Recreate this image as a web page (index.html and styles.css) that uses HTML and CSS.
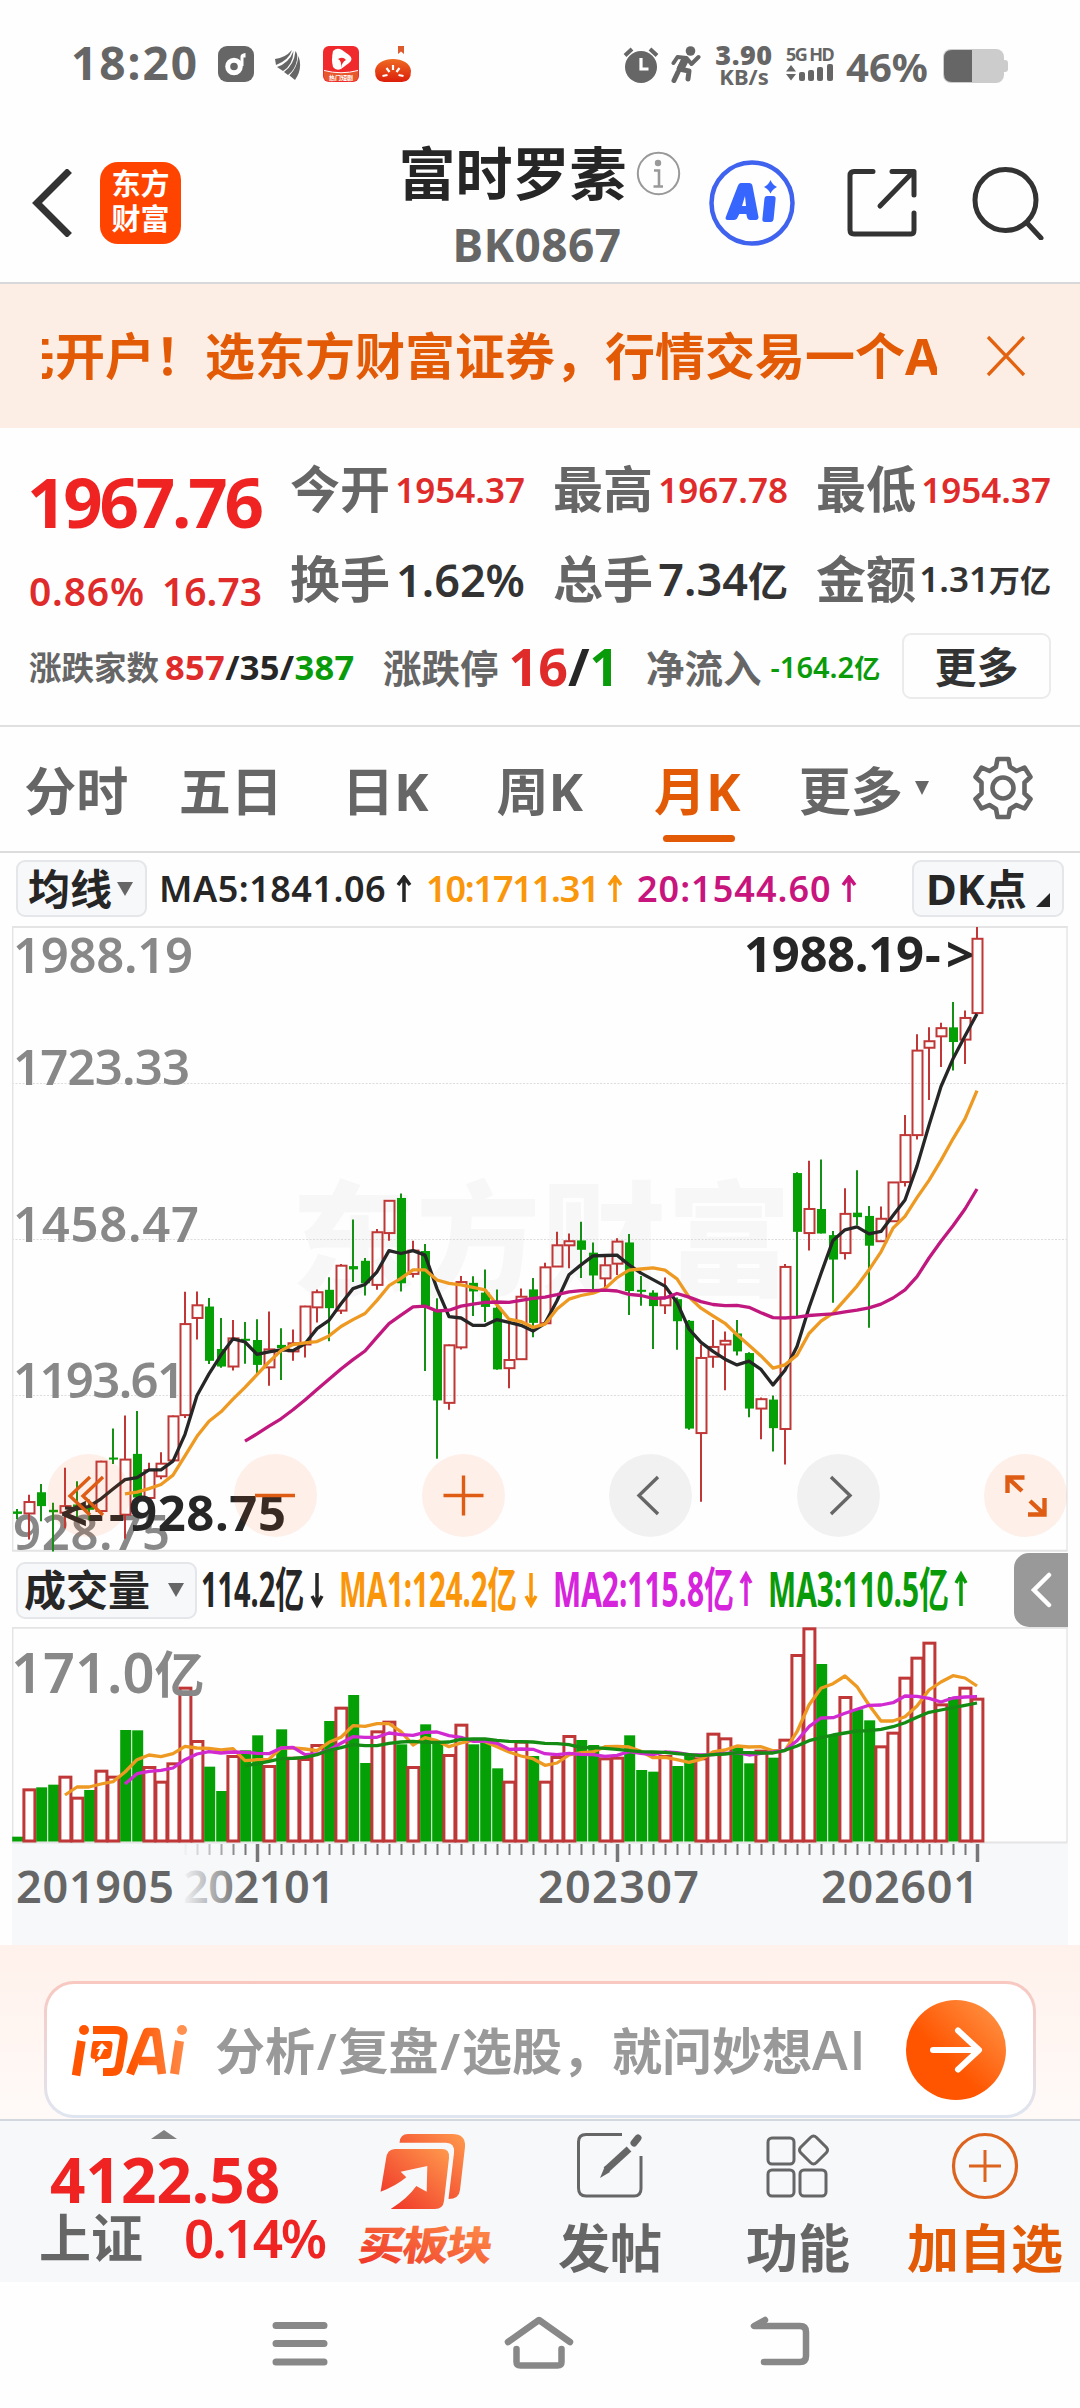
FILE: index.html
```html
<!DOCTYPE html>
<html lang="zh-CN">
<head>
<meta charset="utf-8">
<title>富时罗素 BK0867</title>
<link rel="stylesheet" href="styles.css">
</head>
<body>
<svg width="0" height="0" class="defs">
  <defs>
    <linearGradient id="gBuy" x1="0" y1="1" x2="1" y2="0"><stop offset="0" stop-color="#ee2e26"/><stop offset="1" stop-color="#ff9a4d"/></linearGradient>
    <linearGradient id="gGo" x1="0" y1="1" x2="1" y2="0"><stop offset=".4" stop-color="#ff5500"/><stop offset="1" stop-color="#ff9a4d"/></linearGradient>
    <linearGradient id="gAsk" gradientUnits="userSpaceOnUse" x1="0" y1="0" x2="124" y2="0"><stop offset=".5" stop-color="#ff5500"/><stop offset="1" stop-color="#ff9050"/></linearGradient>
    <linearGradient id="gTomato" x1="0" y1="0" x2="0" y2="1"><stop offset="0" stop-color="#ee6a22"/><stop offset="1" stop-color="#dc1e0a"/></linearGradient>
    <linearGradient id="gFade" x1="0" y1="0" x2="1" y2="0"><stop offset="0" stop-color="#f7f8fa"/><stop offset=".15" stop-color="#f7f8fa" stop-opacity=".85"/><stop offset="1" stop-color="#f7f8fa" stop-opacity="0"/></linearGradient>
  </defs>
</svg>

<div class="status">
  <span class="clock">18:20</span>
  <svg class="s-note" width="36" height="36" viewBox="0 0 36 36"><rect width="36" height="36" rx="9" fill="#666"/><circle cx="16" cy="20.5" r="6.3" fill="none" stroke="#fff" stroke-width="5"/><path d="M22.500 20V10.500q0-3 5-3.500v4.500h-2V20z" fill="#fff"/></svg>
  <svg class="s-wing" width="27" height="31" viewBox="0 0 27 31" fill="#666"><path d="M0 10Q10 9 17 1Q14 11 1 16z"/><path d="M2 18Q14 14 18.500 2Q18 16 8 22z"/><path d="M9 23Q19 16 20.500 2Q23 5 22 11Q20 21 13 26z"/><path d="M14.500 26.500Q22 19 23.500 7Q28 20 20 31z"/></svg>
  <svg class="s-video" width="36" height="36" viewBox="0 0 36 36"><rect width="36" height="36" rx="6" fill="#f02a2c"/><path d="M1 25q17 4 34 0v6q-1 4-5 4H6q-4 0-5-4z" fill="#e8562c"/><path d="M1 24.500q17 4.500 34 0" fill="none" stroke="#fff" stroke-width="1"/><path d="M10 5q4-4 9-1l7 5q5 4 0 8l-8 6q-5 2-8-2-2-7 0-16z" fill="#fff"/><path d="M15 13q5-3 8 1-4 2-5 8 1-7-3-9z" fill="#f02a2c"/><text x="18" y="33.500" text-anchor="middle" class="tiny">热门短剧</text></svg>
  <svg class="s-tomato" width="36" height="36" viewBox="0 0 36 36"><path d="M0 25C1 9 35 9 36 25q0 11-9 11H9Q0 36 0 25z" fill="url(#gTomato)"/><path d="M23 0h6v8l-3-2.500-3 2.500z" fill="#dc5a2c"/><path d="M18 19v5M11.500 22l3 4M24.500 22l-3 4M7.500 30l5-1M28.500 30l-5-1" stroke="#fff" stroke-width="2.200"/></svg>
  <span class="grow"></span>
  <svg class="s-alarm" width="36" height="36" viewBox="0 0 36 36"><circle cx="18" cy="20" r="16" fill="#666"/><path d="M2 8.500L9 2M34 8.500L27 2" stroke="#666" stroke-width="4"/><path d="M18 11v11h7.500" fill="none" stroke="#fff" stroke-width="3.200"/></svg>
  <svg class="s-run" width="30" height="37" viewBox="0 0 30 37" fill="none" stroke="#666" stroke-linecap="round" stroke-linejoin="round"><circle cx="19.500" cy="5" r="4.800" fill="#666" stroke="none"/><path d="M2.500 17l4-6 9 1 5 6 7-7" stroke-width="4"/><path d="M12 15l-4 8 10 2-1 8M7 26l-4 8.500" stroke-width="5"/><path d="M14 14l-4 8" stroke-width="7.500"/></svg>
  <span class="net"><b>3.90</b><i>KB/s</i></span>
  <span class="cell"><b>5G HD</b>
    <svg width="48" height="17" viewBox="0 0 48 17" fill="#666"><path d="M0 7.500L5 1l5 6.500zM0 10l5 6.500 5-6.500z"/><rect x="13" y="8" width="6" height="9" rx="2"/><rect x="22" y="6" width="6" height="11" rx="2"/><rect x="31" y="3" width="6" height="14" rx="2"/><rect x="41" y="0" width="6" height="17" rx="2"/></svg>
  </span>
  <span class="pct">46%</span>
  <svg class="s-bat" width="65" height="34" viewBox="0 0 65 34"><rect width="61" height="34" rx="8" fill="#ccc"/><rect x="58" y="11" width="7" height="12" rx="3" fill="#ccc"/><path d="M29 1v32H9q-8 0-8-8V9q0-8 8-8z" fill="#666"/></svg>
</div>

<header class="top">
  <div class="top-left">
    <svg width="40" height="68" viewBox="0 0 40 68"><path d="M35 4L5 34l30 30" fill="none" stroke="#333" stroke-width="7" stroke-linecap="square"/></svg>
    <div class="brand"><span>东方</span><span>财富</span></div>
  </div>
  <div class="top-mid">
    <div class="name">富时罗素<svg width="45" height="45" viewBox="0 0 45 45"><circle cx="22.500" cy="22.500" r="20.700" fill="none" stroke="#999" stroke-width="2"/><circle cx="22" cy="12" r="3.200" fill="#999"/><path d="M18 19.500h5V35M17.500 35.500h9.500" fill="none" stroke="#999" stroke-width="2.600"/></svg></div>
    <div class="code">BK0867</div>
  </div>
  <div class="top-right">
    <svg width="88" height="88" viewBox="0 0 88 88"><circle cx="44" cy="44" r="40.500" fill="none" stroke="#3f63ee" stroke-width="4.500"/><path d="M32 24h9q3 0 3.500 3l6 31q0 3-3 3h-5q-3 0-3.500-3l-.7-3h-7l-1.500 3q-1 3-4 3h-6q-3 0-2-3l12-31q1-3 3-3zm2 23h4l-1-10z" fill="#3766ff"/><path d="M59 37h6q3 0 2.600 3l-2 20q-.5 3-3 3H57q-3 0-2.600-3l2-20q.4-3 2.600-3zM62.500 21q2 5 6.500 7-4.500 2-6.500 6.500Q60.500 30 56 28q4.500-2 6.500-7z" fill="#3766ff"/></svg>
    <svg width="72" height="72" viewBox="0 0 72 72" fill="none" stroke="#333" stroke-width="5" stroke-linecap="round" stroke-linejoin="round"><path d="M27 4.500H8q-4 0-4 4V63q0 4 4 4h57q3 0 3-4V46M46 4.500h22V28M67 5L34 39"/></svg>
    <svg width="72" height="74" viewBox="0 0 72 74" fill="none" stroke="#333" stroke-width="5" stroke-linecap="round"><circle cx="33.500" cy="34" r="30.500"/><path d="M56 58l13 14"/></svg>
  </div>
</header>

<div class="banner">
  <div class="marquee"><span>先开户！选东方财富证券，行情交易一个APP</span></div>
  <svg width="40" height="42" viewBox="0 0 40 42"><path d="M2 2l36 38M38 2L2 40" stroke="#e2620f" stroke-width="3.300"/></svg>
</div>

<section class="quote">
  <div class="q-main">
    <div class="q-price">
      <div class="price">1967.76</div>
      <div class="chg"><span>0.86%</span><span>16.73</span></div>
    </div>
    <dl class="q-grid">
      <div><dt>今开</dt><dd class="red">1954.37</dd></div>
      <div><dt>最高</dt><dd class="red">1967.78</dd></div>
      <div><dt>最低</dt><dd class="red">1954.37</dd></div>
      <div><dt>换手</dt><dd class="mid">1.62%</dd></div>
      <div><dt>总手</dt><dd class="mid">7.34<small>亿</small></dd></div>
      <div><dt>金额</dt><dd>1.31<small>万亿</small></dd></div>
    </dl>
  </div>
  <div class="q-row">
    <div class="c1"><span class="lab">涨跌家数</span><span class="val"><em class="red">857</em>/35/<em class="green">387</em></span></div>
    <div class="c2"><span class="lab">涨跌停</span><span class="val"><em class="red">16</em>/<em class="green">1</em></span></div>
    <div class="c3"><span class="lab">净流入</span><span class="val green">-164.2<small>亿</small></span></div>
    <div class="more"><span>更多</span></div>
  </div>
</section>

<nav class="tabs">
  <span>分时</span><span>五日</span><span>日K</span><span>周K</span><span class="on">月K</span>
  <span>更多<i class="tri"></i></span>
  <span><svg width="64" height="64" viewBox="0 0 64 64" fill="none" stroke="#666" stroke-width="4.600" stroke-linejoin="round"><path d="M26.500 3h11l1.500 8 6.500 4 8-3.500 6 9.500-6 5.500v11l6 5.500-6 9.500-8-3.500-6.500 4-1.500 8h-11l-1.500-8-6.500-4-8 3.500-6-9.500 6-5.500v-11l-6-5.500 6-9.500 8 3.500 6.500-4z"/><circle cx="32" cy="32" r="10.500"/></svg></span>
</nav>

<div class="mabar">
  <div class="pill p-ma"><span>均线</span><i class="tri"></i></div>
  <span class="m1">MA5:1841.06</span><svg class="arr a1" viewBox="0 0 16 28"><path d="M8 27V3M2 10l6-8 6 8"/></svg>
  <span class="m2">10:1711.31</span><svg class="arr a2" viewBox="0 0 16 28"><path d="M8 27V3M2 10l6-8 6 8"/></svg>
  <span class="m3">20:1544.60</span><svg class="arr a3" viewBox="0 0 16 28"><path d="M8 27V3M2 10l6-8 6 8"/></svg>
  <span class="grow"></span>
  <div class="pill p-dk"><span>DK点</span><svg width="14" height="14" viewBox="0 0 14 14"><path d="M14 0v14H0z" fill="#262626"/></svg></div>
</div>

<section class="kline">
  <svg id="kchart" width="1080" height="633" viewBox="0 0 1080 633"></svg>
  <div class="tools">
    <b><svg viewBox="0 0 83 83" stroke="#de5c14"><path d="M43 23L23 42l20 19M56 23L36 42l20 19"/></svg></b>
    <b><svg viewBox="0 0 83 83" stroke="#de5c14"><path d="M21 41.500h40"/></svg></b>
    <b><svg viewBox="0 0 83 83" stroke="#de5c14"><path d="M21.500 41.500h40M41.500 21.500v40"/></svg></b>
    <b class="gray"><svg viewBox="0 0 83 83" stroke="#666"><path d="M49 23L30 41.500 49 60"/></svg></b>
    <b class="gray"><svg viewBox="0 0 83 83" stroke="#666"><path d="M34 23l19 18.500L34 60"/></svg></b>
    <b><svg class="bold" viewBox="0 0 83 83" stroke="#de5c14"><path d="M23.500 39V23.500h17M24 24l14 13M46 47l14 13M44 60.500h16.500V44"/></svg></b>
  </div>
</section>

<div class="volbar">
  <div class="pill p-vol"><span>成交量</span><i class="tri"></i></div>
  <svg class="voltext" width="780" height="60" viewBox="0 0 780 60">
    <g class="vt">
      <text x="0" y="47" textLength="103" lengthAdjust="spacingAndGlyphs" fill="#262626">114.2亿</text>
      <text x="138" y="47" textLength="178" lengthAdjust="spacingAndGlyphs" fill="#fa960a">MA1:124.2亿</text>
      <text x="352" y="47" textLength="181" lengthAdjust="spacingAndGlyphs" fill="#d623dc">MA2:115.8亿</text>
      <text x="567" y="47" textLength="181" lengthAdjust="spacingAndGlyphs" fill="#0a9b0a">MA3:110.5亿</text>
    </g>
  </svg>
  <div class="fold"><svg width="24" height="36" viewBox="0 0 24 36"><path d="M20 3L5 18l15 15" fill="none" stroke="#fff" stroke-width="4.500" stroke-linecap="round"/></svg></div>
</div>

<section class="volume"><svg id="vchart" width="1080" height="318" viewBox="0 0 1080 318"></svg></section>

<section class="ask">
  <div class="askbox">
    <svg width="124" height="64" viewBox="0 0 124 64" fill="none" stroke="url(#gAsk)" stroke-linejoin="round">
      <path d="M12.500 23L7 57.500" stroke-width="8.500"/>
      <path d="M24 12h22q10 0 8.500 9l-4.500 27q-1 6-7 6h-9" stroke-width="8"/>
      <path d="M25 23h15q4 0 3.500 4l-1.500 10q-.7 4-5 4h-6l-5 4v-4q-5 0-4.300-4l1.300-10q.5-4 2-4z" fill="#ff5500" stroke="none"/>
      <path d="M31 39l4-8h4l-6-6-6 6h4l-3 7" fill="#fff" stroke="none"/>
      <path d="M61 56L78 14h9l6 42M70 43h20" stroke-width="8.500"/>
      <path d="M110.500 23l-5 33" stroke-width="9"/>
      <circle cx="15" cy="12" r="5" fill="#ff5500" stroke="none"/><circle cx="113" cy="12" r="5" fill="#ff9050" stroke="none"/>
    </svg>
    <span>分析<i>/</i>复盘<i>/</i>选股，就问妙想<b>AI</b></span>
    <svg class="go" width="100" height="100" viewBox="0 0 100 100"><circle cx="50" cy="50" r="50" fill="url(#gGo)"/><path d="M27 50h45M52 30.500L73 50 52 69.500" fill="none" stroke="#fff" stroke-width="6" stroke-linecap="round" stroke-linejoin="round"/></svg>
  </div>
</section>

<footer class="bar">
  <div class="index">
    <i class="up"></i>
    <div class="i1">4122.58</div>
    <div class="i2"><span>上证</span><b>0.14%</b></div>
  </div>
  <div class="buy">
    <svg width="88" height="80" viewBox="0 0 88 80" fill="url(#gBuy)"><path d="M19.500 10.700Q20 2 28 2h44q14 0 13 13l-5 43q-1 9-11.500 9l5.500-46q1-10.300-8-10.300z"/><path d="M6 27q1-10 9-10h47q8 0 7 9l-5 43q-1 8-9 8H10.700Q28 66 36.300 54l10.400 5.700L47.300 34l-26.600 5.700 5.600 5.600Q16 54 .6 59.700z"/></svg>
    <svg width="144" height="54" viewBox="0 0 144 54"><text x="0" y="0" transform="translate(4 46) skewX(-8) scale(1 .87)" textLength="134" fill="url(#gBuy)">买板块</text></svg>
  </div>
  <div class="act">
    <svg width="68" height="68" viewBox="0 0 68 68" fill="none" stroke="#666"><path d="M46 2.500H10q-7.500 0-7.500 7.500v46q0 8 7.500 8h48q7 0 7-7.500V24" stroke-width="3"/><path d="M62 6l-4 5" stroke-width="7" stroke-linecap="round"/><path d="M53 17L30 38" stroke-width="7"/><path d="M29 34l-5 12 10-6z" fill="#666" stroke="none"/></svg>
    <span>发帖</span>
  </div>
  <div class="act">
    <svg width="64" height="68" viewBox="0 0 64 68" fill="none" stroke="#666" stroke-width="3"><rect x="2" y="6" width="26" height="26" rx="4"/><rect x="2" y="38" width="26" height="26" rx="4"/><rect x="34" y="38" width="26" height="26" rx="4"/><path d="M44.500 5.500q3-3 6 0l10 10q2 2.500 0 5l-10 10q-3 3-6 0l-10-10q-2-2.500 0-5z"/></svg>
    <span>功能</span>
  </div>
  <div class="act add">
    <svg width="68" height="68" viewBox="0 0 68 68" fill="none" stroke="#dc641e"><circle cx="34" cy="34" r="31.500" stroke-width="3.200"/><path d="M18 34h32M34 18v32" stroke-width="3"/></svg>
    <span>加自选</span>
  </div>
</footer>

<div class="sys">
  <svg width="56" height="56" viewBox="0 0 56 56" stroke="#888" stroke-width="7" stroke-linecap="round"><path d="M4 9.500h48M4 27.500h48M4 46h48"/></svg>
  <svg width="70" height="56" viewBox="0 0 70 56" fill="none" stroke="#888" stroke-width="6.500" stroke-linecap="round" stroke-linejoin="round"><path d="M4 26L35 4l31 22M12.500 33v13q0 3.500 4 3.500h37q4 0 4-3.500V33"/></svg>
  <svg width="60" height="56" viewBox="0 0 60 56" fill="none" stroke="#888" stroke-width="6.500" stroke-linecap="round" stroke-linejoin="round"><path d="M15 4L4 10h46q6 0 6 6v24q0 6-6 6H14"/></svg>
</div>
<script src="charts.js"></script>
</body>
</html>
```
FILE: styles.css
```css
* { box-sizing: border-box; margin: 0; padding: 0; }
body { width: 1080px; height: 2408px; overflow: hidden; background: #fefefe; color: #262626; font-family: "Noto Sans", "Noto Sans CJK SC", sans-serif; font-weight: 600; }
svg { display: block; flex: none; }
.defs { position: absolute; }
i, em { font-style: normal; }
.grow { flex: 1; }
.red { color: #e02b2b; }
.green { color: #0a9b0a; }
.tri { display: inline-block; border: solid transparent; border-width: 14px 8.5px 0; border-top-color: #666; }

.status { height: 104px; display: flex; align-items: flex-start; padding: 0 72px 0 71px; color: #666; }
.clock { font-size: 46px; line-height: 60px; margin-top: 32px; width: 147px; letter-spacing: 2px; font-weight: 700; }
.s-note { margin-top: 46px; }
.s-wing { margin: 49px 0 0 21px; }
.s-video { margin: 46px 0 0 21px; }
.s-tomato { margin: 46px 0 0 16px; }
.tiny { font-size: 6px; fill: #fff; }
.s-alarm { margin: 47px 12px 0 0; }
.s-run { margin: 46px 13px 0 0; }
.net { width: 60px; margin: 43px 12px 0 0; display: flex; flex-direction: column; align-items: center; }
.net b { font-size: 27px; line-height: 23px; letter-spacing: .5px; }
.net i { font-size: 22px; line-height: 20px; font-weight: 700; }
.cell { width: 48px; margin: 46px 12px 0 0; }
.cell b { display: block; font-size: 18px; line-height: 16px; letter-spacing: -1.6px; margin-bottom: 2px; white-space: nowrap; font-weight: 700; }
.pct { font-size: 40px; line-height: 50px; margin: 42px 15px 0 0; width: 82px; font-weight: 700; }
.s-bat { margin-top: 49px; }

.top { height: 180px; display: grid; grid-template-columns: 380px 1fr 380px; border-bottom: 2px solid #d8d8da; }
.top-left { display: flex; align-items: center; padding: 19px 0 0 32px; gap: 28px; }
.brand { width: 81px; height: 82px; border-radius: 18px; background: #ff4400; color: #fff; font-size: 29px; line-height: 35px; font-weight: 700; display: flex; flex-direction: column; align-items: center; justify-content: center; }
.brand span { position: relative; top: -2px; }
.top-mid { display: flex; flex-direction: column; align-items: center; padding-top: 33px; }
.name { display: flex; align-items: center; gap: 9px; font-size: 57px; line-height: 72px; color: #262626; font-weight: 700; white-space: nowrap; margin-left: -1px; }
.code { font-size: 46px; line-height: 60px; color: #666; margin: 5px 0 0 -6px; letter-spacing: .4px; font-weight: 700; }
.top-right { display: flex; align-items: center; justify-content: flex-end; padding: 20px 36px 0 0; gap: 50px; }
.top-right svg:last-child { margin-left: 4px; }

.banner { height: 144px; background: #fceee5; display: flex; align-items: center; padding: 0 54px 0 42px; justify-content: space-between; }
.marquee { width: 895px; overflow: hidden; }
.marquee span { display: block; margin-left: -37px; font-size: 50px; line-height: 70px; white-space: nowrap; color: #e25a06; font-weight: 700; }

.quote { height: 299px; border-bottom: 2px solid #e0e0e0; padding: 26px 29px 0 29px; }
.q-main { display: flex; }
.q-price { width: 233px; margin-right: 28px; }
.price { font-size: 69px; line-height: 94px; letter-spacing: -3.2px; color: #f02323; font-weight: 700; margin-left: -2px; white-space: nowrap; }
.chg { display: flex; justify-content: space-between; font-size: 39px; line-height: 50px; margin-top: 18px; color: #e02b2b; }
.chg span:first-child { letter-spacing: .8px; }
.q-grid { display: grid; grid-template-columns: repeat(3, 235px); column-gap: 28px; row-gap: 18px; }
.q-grid div { display: flex; justify-content: space-between; align-items: center; height: 71px; }
dt { font-size: 50px; line-height: 71px; color: #666; font-weight: 700; }
dd { font-size: 35px; line-height: 71px; color: #333; }
dd.red { color: #e02b2b; }
dd.mid { font-size: 45px; }
dd.mid small { font-size: 40px; }
dd small { font-size: 31px; }
.q-row { display: grid; grid-template-columns: 354px 263px 256px 149px; margin-top: 17px; align-items: center; white-space: nowrap; }
.q-row > div { display: flex; align-items: center; }
.lab { color: #666; font-size: 38.500px; }
.c1 .lab { font-size: 32.500px; margin-right: 6px; }
.c1 .val { font-size: 34.500px; letter-spacing: .3px; font-weight: 700; }
.c2 .lab { margin-right: 10px; }
.c2 .val { font-size: 52px; line-height: 60px; font-weight: 700; }
.c3 .lab { margin-right: 9px; }
.c3 .val { font-size: 29px; }
.c3 small { font-size: 26px; }
.q-row .more { height: 66px; border: 2px solid #ebebeb; border-radius: 9px; justify-content: center; font-size: 42px; color: #333; font-weight: 700; }
.more span { padding-bottom: 3px; }

.tabs { height: 126px; display: grid; grid-template-columns: repeat(7, 154.500px); font-size: 52px; color: #666; border-bottom: 2px solid #dcdcdc; font-weight: 700; margin-left: -1px; }
.tabs span { display: flex; align-items: center; justify-content: center; position: relative; height: 124px; padding-bottom: 2px; white-space: nowrap; }
.tabs .tri { border-width: 14px 7.5px 0; margin-left: 12px; }
.tabs span:nth-child(6) { padding-left: 30px; }
.tabs .on { color: #e25a06; padding-left: 6px; }
.tabs .on::after { content: ""; position: absolute; bottom: 9px; left: 46px; width: 72px; height: 7px; border-radius: 4px; background: #e25a06; }

.mabar { height: 67px; display: flex; align-items: center; padding: 4px 16px 0 16px; font-size: 36px; white-space: nowrap; }
.pill { height: 57px; border: 2px solid #e4e6e9; border-radius: 9px; background: #f7f8fa; display: flex; align-items: center; font-size: 42px; flex: none; color: #262626; font-weight: 700; }
.pill span { padding-bottom: 5px; }
.p-ma { width: 131px; padding-left: 10px; margin-right: 12px; }
.p-ma .tri { margin-left: 5px; }
.p-dk { width: 152px; padding-left: 12px; }
.p-dk svg { margin: 22px 0 0 9px; }
.arr { width: 16px; height: 28px; fill: none; stroke-width: 3.500; }
.m1 { width: 237px; letter-spacing: .5px; }
.m2 { width: 181px; color: #fa960a; letter-spacing: -1.2px; }
.m3 { width: 204px; color: #c8147d; letter-spacing: 1px; }
.a1 { stroke: #262626; margin-right: 14px; }
.a2 { stroke: #fa960a; margin-right: 14px; }
.a3 { stroke: #c8147d; }

.kline { height: 633px; position: relative; }
.tools { position: absolute; left: 47px; top: 534px; width: 1020px; display: flex; justify-content: space-between; }
.tools b { width: 83px; height: 83px; border-radius: 50%; background: rgba(255, 90, 20, .09); }
.tools b.gray { background: rgba(0, 0, 0, .05); }
.tools svg { width: 83px; height: 83px; fill: none; stroke-width: 3.4; }
.tools .bold { stroke-width: 4.4; }
.axis { font-size: 49px; fill: #888; }
.mark { font-size: 49px; fill: #262626; font-weight: 700; }
.wm { font-size: 124px; fill: #f7f7f7; font-weight: 900; font-family: "Noto Sans CJK SC", sans-serif; }

.volbar { height: 74px; display: flex; align-items: center; padding: 0 12px 0 16px; }
.p-vol { width: 181px; padding-left: 6px; }
.p-vol .tri { margin-left: 18px; }
.vt { font-size: 48px; font-weight: 700; }
.voltext { margin: 0 37px 0 4px; width: 780px; }
.fold { width: 54px; height: 74px; flex: none; border-radius: 15px 0 0 15px; background: #999; display: flex; align-items: center; justify-content: center; margin-left: -4px; }
.volume { height: 318px; }
.vlab { font-size: 56px; fill: #888; }
.vlab .yi { font-size: 50px; }
.date { font-size: 45px; fill: #666; }

.ask { height: 174px; padding: 36px 44px 0; background: linear-gradient(#fff1eb, #fffaf8); }
.askbox { height: 137px; border: 3px solid transparent; border-radius: 30px; background: linear-gradient(#fff, #fff) padding-box, linear-gradient(#f8c8c0, #dfe6f1) border-box; display: flex; align-items: center; padding: 0 27px 0 22px; }
.askbox span { font-size: 50px; line-height: 70px; color: #999; margin-left: 22px; flex: 1; white-space: nowrap; padding-top: 3px; }
.askbox i { margin: 0 1.8px; }
.askbox b { font-family: "Open Sans", sans-serif; font-weight: 600; font-size: 54px; line-height: 1; letter-spacing: 1.5px; }

.bar { height: 163px; border-top: 2px solid #d3d8df; background: #f7f8fa; display: grid; grid-template-columns: 345px 157px 216px 160px 1fr; }
.index { padding-left: 39px; }
.up { display: block; margin: 9px 0 0 112px; width: 0; border: solid transparent; border-width: 0 13px 9px; border-bottom-color: #808080; }
.i1 { font-size: 62px; line-height: 74px; color: #f02323; margin: 3px 0 0 11px; font-weight: 700; }
.i2 { display: flex; font-size: 52px; line-height: 66px; color: #666; margin-top: -11px; align-items: center; font-weight: 700; }
.i2 b { font-size: 53px; letter-spacing: -2.200px; font-weight: 600; color: #f02323; margin-left: 41px; }
.buy { display: flex; flex-direction: column; align-items: center; padding-top: 11px; }
.buy text { font-size: 46px; font-weight: 900; font-family: "Noto Sans CJK SC", sans-serif; }
.buy svg:last-child { margin: 2px 0 0 3px; }
.act { display: flex; flex-direction: column; align-items: center; padding-top: 11px; font-size: 52px; line-height: 66px; color: #666; font-weight: 700; }
.act span { margin-top: 15px; white-space: nowrap; }
.add { color: #e25a06; margin-left: 12px; }

.sys { height: 126px; display: flex; justify-content: space-between; padding: 34px 270px 0 272px; background: #fefefe; }
```
FILE: charts.js
```js
const STEP = 12, X0 = 17;
const RED = '#bf3737', GREEN = '#05a005';
const cx = i => X0 + STEP * i;
const priceY = v => v / 2.45;
const volY = v => v / 3 - 77;

// colour, high, body top, body bottom, low
const candles = `G 1443 1449 1455 1468|R 1408 1426 1454 1518|G 1382 1402 1436 1473|G 1428 1445 1451 1547|R 1342 1436 1452 1490|G 1375 1432 1445 1465|G 1420 1435 1445 1470|R 1325 1327 1448 1448|G 1246 1317 1322 1333|R 1214 1322 1457 1516|G 1203 1308 1415 1420|R 1330 1348 1416 1418|R 1304 1332 1363 1370|R 1214 1216 1324 1324|R 911 990 1213 1220|R 910 944 975 1028|G 926 947 1080 1088|G 975 1051 1094 1097|R 980 1025 1094 1104|G 985 1026 1031 1087|G 978 1029 1090 1110|R 959 1052 1096 1141|G 1000 1041 1049 1127|R 1003 1037 1057 1080|R 945 947 1040 1072|R 905 912 949 986|G 875 906 951 1032|R 843 847 957 965|G 734 848 856 887|G 828 835 890 920|R 757 765 894 906|R 687 688 767 786|G 670 681 890 910|R 786 810 867 876|G 794 811 947 1105|G 927 957 1177 1320|R 1040 1042 1183 1200|R 872 887 1047 1052|G 873 889 910 970|G 856 913 948 985|G 905 950 1101 1102|R 980 1078 1098 1147|R 903 923 1076 1077|G 877 905 987 1022|R 840 851 988 990|R 764 797 849 850|R 768 787 797 853|G 739 785 808 877|G 790 815 871 905|R 818 846 878 900|R 780 788 842 870|G 769 790 909 968|G 872 906 911 945|G 907 913 946 1051|R 876 925 944 965|G 925 929 983 1053|G 980 982 1246 1249|R 1040 1073 1257 1425|R 980 1046 1070 1097|R 1008 1031 1040 1152|G 980 1013 1057 1067|G 1059 1061 1197 1218|R 1170 1174 1197 1272|G 1165 1175 1245 1302|R 843 850 1247 1334|G 618 620 764 970|R 590 708 767 810|G 587 708 768 768|G 762 772 832 938|R 657 720 816 832|G 613 717 728 748|G 701 725 798 999|R 702 732 787 788|R 643 643 738 740|R 478 527 642 653|R 280 320 527 538|R 263 297 313 441|R 252 265 285 360|G 201 263 299 369|R 222 240 293 353|R 17 46 228 228`.split('|').map(s => s.split(' '));

const ma5 = [1440,1443,1437,1418,1394,1371,1366,1347,1347,1326,1260,1165,1112,1066,1026,1034,1064,1058,1053,1055,1038,1001,981,940,903,893,862,810,817,810,821,903,972,975,993,993,979,986,993,1007,988,933,869,845,823,822,821,845,865,881,897,937,1002,1035,1057,1076,1090,1081,1101,1139,1103,1045,950,866,785,759,752,769,763,724,686,603,503,408,340,284,230];
const ma10 = [1406,1402,1393,1383,1360,1313,1265,1228,1205,1174,1145,1114,1083,1055,1040,1036,1033,1019,996,979,964,932,896,878,857,857,882,890,894,900,906,943,978,984,998,990,953,929,920,914,903,876,858,855,852,858,879,924,951,970,988,1016,1042,1068,1098,1090,1066,1013,983,963,930,897,857,813,755,726,680,638,589,536,487,418];
const ma20 = [1277,1259,1240,1222,1200,1176,1150,1125,1100,1077,1056,1022,989,968,948,946,958,956,946,941,937,936,937,932,927,924,918,911,908,908,907,909,917,920,927,926,915,924,935,942,945,944,949,962,974,975,973,969,967,965,960,956,950,941,926,906,874,828,787,749,708,659];

const bars = 'G860 R715 G712 G704 R677 R740 G720 R659 R677 G540 G541 R648 R692 R637 R410 R570 G650 G723 R615 G601 G556 R645 G538 R620 R624 R582 G513 R470 G435 G639 R541 R512 G583 R648 G523 G575 R612 R521 G583 G577 G655 R692 R572 G618 R692 R618 R555 G570 G585 R622 R620 G556 G660 G665 R615 G648 G618 R622 R548 R562 G592 G640 R599 G623 R566 R312 R232 G342 G557 R438 G478 G511 R586 R545 R380 R320 R275 R460 G441 R410 R443'.split(' ');
const v5 = [735,711,711,702,695,666,629,615,620,611,589,594,595,600,596,632,629,628,594,594,597,602,577,562,527,529,521,521,545,585,563,572,590,579,571,575,590,606,618,626,646,639,615,608,606,590,589,591,604,623,622,629,637,628,606,600,588,591,590,602,602,545,465,415,401,378,410,465,513,513,500,468,420,396,377,384,408];
const v10 = [702,671,664,661,654,629,612,605,609,606,607,610,611,594,592,614,612,600,580,560,562,562,549,554,556,547,546,557,562,574,573,580,598,597,598,611,614,610,613,614,619,616,605,610,614,606,608,614,615,614,610,608,615,610,606,601,572,530,504,503,490,478,466,465,458,438,439,445,456,444,441,440];
const v20 = [648,641,634,626,625,622,614,601,593,584,587,587,580,576,574,577,577,576,568,567,567,571,574,575,576,580,581,584,593,593,595,598,602,605,606,607,611,614,617,614,612,608,608,609,609,601,588,572,563,555,549,543,542,538,530,518,502,487,480,473,466,459];

function line(data, toY, color, width) {
  const from = 81 - data.length;
  const pts = data.map((v, k) => cx(from + k) + ',' + toY(v).toFixed(1)).join(' ');
  return `<polyline points="${pts}" fill="none" stroke="${color}" stroke-width="${width}" stroke-linejoin="round"/>`;
}

let k = '<text class="wm" x="291" y="366" textLength="500">东方财富</text>';
[163.5, 319.5, 475.5].forEach(y => { k += `<path d="M12 ${y}H1067" stroke="#ddd" stroke-dasharray="2 1.500"/>`; });
k += '<path d="M12 7H1067.500M12 630.800H1067.500" stroke="#e4e4e4" stroke-width="2"/><path d="M12.700 6V631M1067 6V631" stroke="#e4e4e4" stroke-width="1.400"/>';
[['1988.19', 53, 180], ['1723.33', 164.500, 177], ['1458.47', 321.500, 186], ['1193.61', 477.500, 172], ['928.75', 629.500, 157]].forEach(([t, y, w]) => { k += `<text class="axis" x="13" y="${y}" textLength="${w}">${t}</text>`; });
candles.forEach(([c, h, t, b, l], i) => {
  const x = cx(i), [H, T, B, L] = [h, t, b, l].map(v => priceY(+v));
  if (c === 'R') {
    k += `<path d="M${x} ${H}V${T}M${x} ${B}V${L}" stroke="${RED}" stroke-width="2"/><rect x="${x - 4.500}" y="${T}" width="10" height="${B - T}" fill="none" stroke="${RED}" stroke-width="2"/>`;
  } else {
    k += `<path d="M${x} ${H}V${L}" stroke="#149114" stroke-width="2"/><rect x="${x - 4}" y="${T}" width="9" height="${Math.max(2, B - T)}" fill="${GREEN}"/>`;
  }
});
k += line(ma5, priceY, '#262626', 3.3) + line(ma10, priceY, '#ee9a22', 3.3) + line(ma20, priceY, '#c0187e', 3.3);
k += '<text class="mark" x="744" y="52" textLength="180">1988.19</text><text class="mark" x="925 946" y="52">-&gt;</text>';
k += '<text class="mark" x="60 88 109" y="611">&lt;--</text><text class="mark" x="129" y="611" textLength="157">928.75</text>';
document.getElementById('kchart').innerHTML = k;

let v = '<rect x="12" y="216" width="1056" height="102" fill="#f7f8fa"/>';
v += '<path d="M12 .8H1067.500M12 215.500H1067.500" stroke="#e4e4e4" stroke-width="2"/><path d="M12.700 0V215M1067 0V215" stroke="#e4e4e4" stroke-width="1.400"/>';
bars.forEach((s, i) => {
  const x = cx(i), y = volY(+s.slice(1));
  v += s[0] === 'R'
    ? `<rect x="${x + .3 - 5.400}" y="${y + 1.500}" width="11" height="${212.500 - y}" fill="#fefefe" stroke="${RED}" stroke-width="3"/>`
    : `<rect x="${x - 4.800}" y="${y}" width="11" height="${214.500 - y}" fill="${GREEN}"/>`;
});
v += '<text class="vlab" x="11" y="66">171.0<tspan class="yi">亿</tspan></text>';
v += line(v5, volY, '#ee9a22', 3.3) + line(v10, volY, '#d02ad0', 3.3) + line(v20, volY, '#148c14', 3.3);
for (let i = 0; i < 81; i++) {
  const long = i === 20 || i === 50 || i === 80;
  v += `<path d="M${cx(i) + .5} 217V${long ? 235 : 228}" stroke="#777" stroke-width="${long ? 3.500 : 2}"/>`;
}
v += '<text class="date" x="183" y="276" textLength="152">202101</text><rect x="12" y="217" width="170" height="101" fill="#f7f8fa"/><rect x="181" y="217" width="64" height="70" fill="url(#gFade)"/>';
v += '<text class="date" x="16" y="276" textLength="158">201905</text><text class="date" x="538" y="276" textLength="161">202307</text><text class="date" x="821" y="276" textLength="158">202601</text>';
document.getElementById('vchart').innerHTML = v;

// direction arrows beside the volume averages
document.querySelector('.voltext').insertAdjacentHTML('beforeend',
  [[116, 0, '#262626'], [330, 0, '#fa960a'], [545, 1, '#d623dc'], [760, 1, '#0a9b0a']].map(([x, up, c]) =>
    `<path d="${up ? `M${x} 46V14M${x - 5} 23L${x} 14l5 9` : `M${x} 13V45M${x - 5} 36L${x} 45l5-9`}" fill="none" stroke="${c}" stroke-width="3.500"/>`).join(''));
```
